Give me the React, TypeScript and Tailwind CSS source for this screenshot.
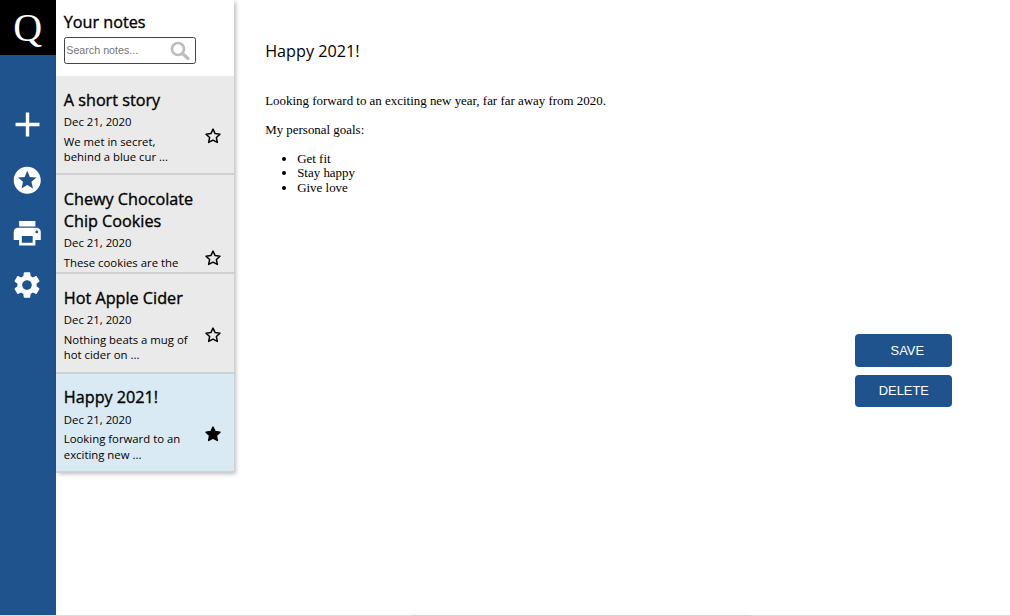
import React from "react";
import { MdAdd, MdStars, MdPrint, MdSettings } from "react-icons/md";

type Note = { title: string; date: string; preview: string[]; starred?: boolean; selected?: boolean };

const notes: Note[] = [
  { title: "A short story", date: "Dec 21, 2020", preview: ["We met in secret,", "behind a blue cur ..."] },
  { title: "Chewy Chocolate Chip Cookies", date: "Dec 21, 2020", preview: ["These cookies are the"] },
  { title: "Hot Apple Cider", date: "Dec 21, 2020", preview: ["Nothing beats a mug of", "hot cider on ..."] },
  {
    title: "Happy 2021!",
    date: "Dec 21, 2020",
    preview: ["Looking forward to an", "exciting new ..."],
    starred: true,
    selected: true,
  },
];

function Star({ filled }: { filled?: boolean }) {
  return (
    <svg viewBox="0 0 24 24" className="size-[18px] shrink-0">
      <path
        d="M12 2.8l2.8 6 6.5.8-4.8 4.5 1.3 6.5-5.8-3.2-5.8 3.2 1.3-6.5L2.7 9.6l6.5-.8z"
        fill={filled ? "#000" : "none"}
        stroke="#000"
        strokeWidth="2"
        strokeLinejoin="round"
      />
    </svg>
  );
}

function NoteCard({ note }: { note: Note }) {
  return (
    <li
      className={`h-[99.2px] overflow-hidden border-b-2 border-[#d0d0d0] pt-[12.6px] pl-[8.3px] ${
        note.selected ? "bg-[#d9eaf5]" : "bg-[#eaeaea]"
      }`}
    >
      <h2 className="w-[150px] text-[16.2px] leading-[22px] [-webkit-text-stroke:0.35px_black]">{note.title}</h2>
      <div className="flex">
        <div className="w-[140.2px] whitespace-nowrap">
          <p className="mt-[3.4px] text-[11.35px] leading-4">{note.date}</p>
          <div className="mt-[3.8px] text-[11.35px] leading-[15.2px]">
            {note.preview.map((line) => (
              <p key={line}>{line}</p>
            ))}
          </div>
        </div>
        <div className="pt-[16.8px]">
          <Star filled={note.starred} />
        </div>
      </div>
    </li>
  );
}

export default function App() {
  return (
    <div className="flex h-[616px] w-[1010px] flex-col overflow-hidden bg-white font-['Open_Sans',sans-serif] text-black">
      <div className="flex min-h-0 flex-1">
        <nav className="flex w-[55.5px] shrink-0 flex-col items-center bg-[#1f538d] text-white">
          <div className="flex h-[55px] w-full justify-center bg-black font-['Liberation_Serif',serif] text-[40px] leading-[55px]">
            Q
          </div>
          <div className="flex w-[54.8px] flex-col items-center self-start">
            <MdAdd className="mt-[48.5px] size-[41px]" />
            <MdStars className="mt-[19.5px] size-[32.5px]" />
            <MdPrint className="mt-[20px] size-[32.5px]" />
            <MdSettings className="mt-[19.5px] size-[32px]" />
          </div>
        </nav>
        <aside className="h-[472px] w-[178px] shrink-0 shadow-[2px_2px_4px_rgba(0,0,0,0.25)]">
          <div className="h-[76px] pt-[11px] pl-[8.3px]">
            <h1 className="text-[16.2px] leading-[22px] [-webkit-text-stroke:0.35px_black]">Your notes</h1>
            <div className="mt-[4px] flex h-[27px] w-[132.5px] items-center justify-between rounded-[2.5px] border border-[#444] pr-[5px] pl-[1.5px]">
              <input
                placeholder="Search notes..."
                className="w-[95px] font-['Liberation_Sans',sans-serif] text-[10.7px] outline-none placeholder:text-[#757575]"
              />
              <svg viewBox="0 0 20 20" className="size-5" fill="none" stroke="#bdbdbd" strokeLinecap="round">
                <circle cx="8" cy="8" r="6" strokeWidth="2.7" />
                <path d="M13 13l5 4.5" strokeWidth="3.2" />
              </svg>
            </div>
          </div>
          <ul>
            {notes.map((n) => (
              <NoteCard key={n.title} note={n} />
            ))}
          </ul>
        </aside>
        <main className="flex flex-1 justify-between">
          <article className="pt-[40px] pl-[31.7px] font-['Liberation_Serif',serif] text-[12.93px] leading-[14.5px]">
            <h2 className="mb-[31.5px] font-['Open_Sans',sans-serif] text-[16.2px] leading-[22px]">Happy 2021!</h2>
            <p className="mb-[14.5px]">Looking forward to an exciting new year, far far away from 2020.</p>
            <p className="mb-[14.5px]">My personal goals:</p>
            <ul className="list-disc pl-8">
              <li>Get fit</li>
              <li>Stay happy</li>
              <li>Give love</li>
            </ul>
          </article>
          <div className="mt-[334px] mr-[57.7px] flex flex-col gap-2 font-['Liberation_Sans',sans-serif] text-[12.9px] text-white">
            <button className="h-[32.5px] w-[97px] rounded-[4px] bg-[#1f538d] pl-[7px]">SAVE</button>
            <button className="h-[32.5px] w-[97px] rounded-[4px] bg-[#1f538d]">DELETE</button>
          </div>
        </main>
      </div>
      <div className="flex h-px justify-center bg-[#dedede] pl-[154px]">
        <div className="h-px w-[340px] bg-[#d2d2d2] shadow-[0_0_6px_rgba(0,0,0,0.15)]" />
      </div>
    </div>
  );
}
